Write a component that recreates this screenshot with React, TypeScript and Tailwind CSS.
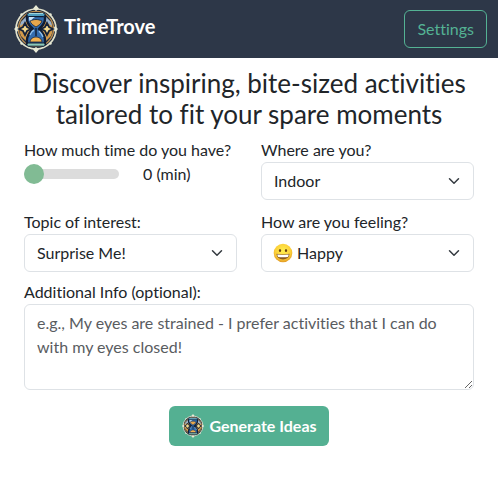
import { useState } from 'react';
import type { ReactNode } from 'react';

function HourglassLogo({ className }: { className: string }) {
  return (
    <svg viewBox="2 2 44 48" className={className} aria-hidden="true">
      <circle cx="24" cy="26" r="20" fill="#1a2940" stroke="#e3e3cd" strokeWidth="1.700" />
      <circle cx="24" cy="26" r="17.600" fill="#1c2d47" stroke="#b98b4e" strokeWidth="1.400" />
      <g fill="#e8ead6">
        <path d="M24 2l3 3.500-3 2.500-3-2.500zM24 44l3 2.500-3 3.500-3-3.500zM2 26l3-3 2 3-2 3zM46 26l-3-3-2 3 2 3z" />
        <circle cx="9.500" cy="11.500" r="1.200" />
        <circle cx="38.500" cy="11.500" r="1.200" />
        <circle cx="9.500" cy="40.500" r="1.200" />
        <circle cx="38.500" cy="40.500" r="1.200" />
      </g>
      <path d="M9 19l5-5c0 5 2 8 5 12-3 4-5 7-5 12l-5-5c-2-4-2-10 0-14zM39 19l-5-5c0 5-2 8-5 12 3 4 5 7 5 12l5-5c2-4 2-10 0-14z" fill="#d39a4a" />
      <path d="M9 19l5-5v5l-6 4zM39 19l-5-5v5l6 4z" fill="#97b2ce" />
      <path d="M13 20l2 4 4 2-4 2-2 4-2-4-4-2 4-2zM35 20l2 4 4 2-4 2-2 4-2-4-4-2 4-2z" fill="#f4d98d" stroke="#14223a" strokeWidth="1.700" />
      <path d="M15 13h18v3c0 5-3 7-6 10 3 3 6 6 6 11v4H15v-4c0-5 3-8 6-11-3-3-6-5-6-10z" fill="#326cae" stroke="#101d34" strokeWidth="2.400" />
      <path d="M17 14h6c-3 2-4 3-4 6-2-2-2-4-2-6z" fill="#c8e3f8" />
      <path d="M18 18c4-2 8-2 12 0-1 3-3 4-6 6-3-2-5-3-6-6z" fill="#e6a64c" stroke="#14223a" strokeWidth="0.800" />
      <path d="M24 25v8" stroke="#183255" strokeWidth="2" />
      <path d="M18 32c1-3 2-4 4-5M31 34c-1-3-2-4-4-6" stroke="#8dc0ef" strokeWidth="1.400" fill="none" />
      <path d="M18 39c0-3 3-5 6-5s6 2 6 5z" fill="#f2b14f" stroke="#14223a" strokeWidth="0.800" />
      <rect x="15" y="10" width="18" height="3.500" rx="1.500" fill="#4f9ec0" stroke="#101d34" strokeWidth="1" />
      <path d="M17 10.500h14" stroke="#9fd3dc" strokeWidth="1" />
      <rect x="15" y="40" width="18" height="3.200" rx="1.500" fill="#8bc8b9" stroke="#101d34" strokeWidth="1" />
    </svg>
  );
}

function GrinningFace() {
  return (
    <svg viewBox="0 0 20 20" className="size-5" aria-hidden="true">
      <defs>
        <radialGradient id="face" cx="50%" cy="38%" r="62%">
          <stop offset="0" stopColor="#fff04f" />
          <stop offset="0.700" stopColor="#fbcd38" />
          <stop offset="1" stopColor="#e19824" />
        </radialGradient>
      </defs>
      <circle cx="10" cy="10" r="9.300" fill="url(#face)" />
      <ellipse cx="7" cy="7.400" rx="1.100" ry="1.500" fill="#69400f" />
      <ellipse cx="13" cy="7.400" rx="1.100" ry="1.500" fill="#69400f" />
      <path d="M3.500 10.800c4 .8 9 .8 13 0-.2 3.600-3 5.700-6.500 5.700s-6.300-2.100-6.500-5.700z" fill="#8a5a20" />
      <path d="M4.300 11.500c3.700.6 7.700.6 11.400 0 0 1-.4 1.800-.9 2.400-3 .5-6.600.5-9.600 0-.5-.6-.9-1.400-.9-2.400z" fill="#fff" />
    </svg>
  );
}

type SelectFieldProps = { id: string; label: string; options: string[]; icon?: ReactNode };

function SelectField({ id, label, options, icon }: SelectFieldProps) {
  return (
    <div>
      <label htmlFor={id} className="block">{label}</label>
      <div className="relative">
        <select
          id={id}
          className={`block h-[38px] w-full appearance-none rounded-md border border-[#dee2e6] bg-white pr-9 ${icon ? 'pl-[35px]' : 'pl-3'}`}
        >
          {options.map((option) => <option key={option}>{option}</option>)}
        </select>
        {icon && <span className="pointer-events-none absolute inset-y-0 left-3 flex items-center">{icon}</span>}
        <span className="pointer-events-none absolute inset-y-0 right-3 flex items-center">
          <svg viewBox="0 0 16 16" className="h-3 w-4" fill="none" stroke="#343a40" strokeWidth="2" strokeLinecap="round" strokeLinejoin="round" aria-hidden="true">
            <path d="m2 5 6 6 6-6" />
          </svg>
        </span>
      </div>
    </div>
  );
}

export default function App() {
  const [minutes, setMinutes] = useState(0);

  return (
    <div className="bg-white font-['Lato',sans-serif] text-base text-[#212529] [font-variant-ligatures:no-common-ligatures]">
      <header className="flex h-[58px] items-center justify-between bg-[#2d3748] pr-[11px] pl-3">
        <div className="flex items-center gap-1">
          <HourglassLogo className="h-12 w-12" />
          <span className="pb-[6px] text-xl font-bold text-white">TimeTrove</span>
        </div>
        <button type="button" className="h-[38px] rounded-md border border-[#54b294] px-3 text-[#54b294]">
          Settings
        </button>
      </header>

      <main className="px-6 pt-[10px]">
        <h1 className="mb-2 text-center text-[26px] leading-[31px]">
          Discover inspiring, bite-sized activities tailored to fit your spare moments
        </h1>
        <form onSubmit={(event) => event.preventDefault()}>
          <div className="mb-2 grid grid-cols-2 gap-x-6 gap-y-[10px]">
            <div>
              <label htmlFor="time" className="block">How much time do you have?</label>
              <div className="flex items-center gap-6">
                <input
                  id="time"
                  type="range"
                  min={0}
                  max={60}
                  value={minutes}
                  onChange={(event) => setMinutes(Number(event.target.value))}
                  className="h-[10px] w-[95px] appearance-none rounded-full bg-[#dcdcdc] [&::-webkit-slider-thumb]:size-5 [&::-webkit-slider-thumb]:appearance-none [&::-webkit-slider-thumb]:rounded-full [&::-webkit-slider-thumb]:bg-[#81bb94]"
                />
                <output htmlFor="time">{minutes} (min)</output>
              </div>
            </div>
            <SelectField id="place" label="Where are you?" options={['Indoor', 'Outdoor']} />
            <SelectField id="topic" label="Topic of interest:" options={['Surprise Me!']} />
            <SelectField id="feeling" label="How are you feeling?" options={['Happy']} icon={<GrinningFace />} />
          </div>
          <label htmlFor="info" className="block">Additional Info (optional):</label>
          <textarea
            id="info"
            placeholder="e.g., My eyes are strained - I prefer activities that I can do with my eyes closed!"
            className="block h-[86px] w-full resize-y rounded-md border border-[#dee2e6] bg-white px-3 py-[6px] placeholder:text-[#595c5f]"
          />
          <button type="submit" className="mx-auto mt-4 flex h-10 items-center gap-1 rounded-md bg-[#54b092] px-3 font-bold text-white">
            <HourglassLogo className="h-6 w-6" />
            Generate Ideas
          </button>
        </form>
      </main>
    </div>
  );
}
